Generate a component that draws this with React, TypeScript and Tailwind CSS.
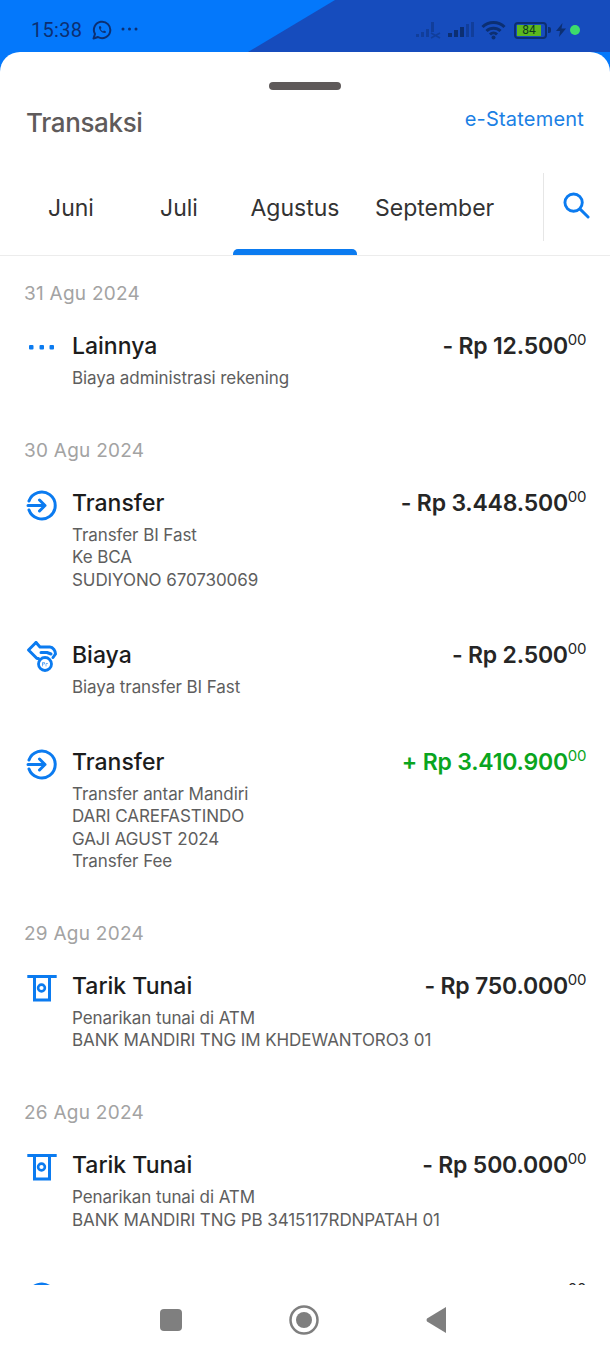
import React from "react";

const font = "font-['Inter','Noto_Sans',sans-serif]";

function TransferIcon() {
  return (
    <svg width="36" height="36" viewBox="0 0 36 36" fill="none" stroke="#0b7bf0" strokeWidth="3" strokeLinecap="round" strokeLinejoin="round">
      <path d="M5 16A13.5 13.5 0 1 1 5 25" />
      <path d="M4 20.5H21M15.5 15 21 20.5 15.5 26" />
    </svg>
  );
}

function FeeIcon() {
  return (
    <svg width="36" height="36" viewBox="0 0 36 36" fill="none" stroke="#0b7bf0" strokeWidth="3" strokeLinecap="round" strokeLinejoin="round">
      <path d="M12 5.5 4.5 13 13 21.5H14.5" />
      <path d="M12 5.5 16 10H26C29 10 31.5 14 31.5 17L29 20.5" />
      <path d="M17 15.5H23L27 17" />
      <circle cx="21" cy="27" r="6.5" strokeWidth="2.8" />
      <path d="M18.5 29V25.5H20.5V27H18.5M22 29V26.5H23.5" strokeWidth="0.8" opacity="0.7" />
    </svg>
  );
}

function AtmIcon() {
  return (
    <svg width="36" height="36" viewBox="0 0 36 36" fill="none" stroke="#0b7bf0" strokeLinejoin="miter">
      <path d="M3.3 8.5H32.7" strokeWidth="3" />
      <path d="M10.5 8.5V32H25.5V8.5" strokeWidth="3" />
      <circle cx="17.5" cy="20" r="3.4" strokeWidth="2.6" />
    </svg>
  );
}

function DotsIcon() {
  return (
    <svg width="36" height="36" viewBox="0 0 36 36" fill="#0b7bf0">
      <rect x="5" y="17" width="4.5" height="4.5" rx="1" />
      <rect x="15.5" y="17" width="4.5" height="4.5" rx="1" />
      <rect x="25.5" y="17" width="4.5" height="4.5" rx="1" />
    </svg>
  );
}

type Row = { icon: React.ReactNode; title: string; lines: string[]; amount: string; plus?: boolean };
type Group = { date: string; rows: Row[] };

const groups: Group[] = [
  {
    date: "31 Agu 2024",
    rows: [{ icon: <DotsIcon />, title: "Lainnya", lines: ["Biaya administrasi rekening"], amount: "- Rp 12.500" }],
  },
  {
    date: "30 Agu 2024",
    rows: [
      { icon: <TransferIcon />, title: "Transfer", lines: ["Transfer BI Fast", "Ke BCA", "SUDIYONO 670730069"], amount: "- Rp 3.448.500" },
      { icon: <FeeIcon />, title: "Biaya", lines: ["Biaya transfer BI Fast"], amount: "- Rp 2.500" },
      { icon: <TransferIcon />, title: "Transfer", lines: ["Transfer antar Mandiri", "DARI CAREFASTINDO", "GAJI AGUST 2024", "Transfer Fee"], amount: "+ Rp 3.410.900", plus: true },
    ],
  },
  {
    date: "29 Agu 2024",
    rows: [{ icon: <AtmIcon />, title: "Tarik Tunai", lines: ["Penarikan tunai di ATM", "BANK MANDIRI TNG IM KHDEWANTORO3 01"], amount: "- Rp 750.000" }],
  },
  {
    date: "26 Agu 2024",
    rows: [
      { icon: <AtmIcon />, title: "Tarik Tunai", lines: ["Penarikan tunai di ATM", "BANK MANDIRI TNG PB 3415117RDNPATAH 01"], amount: "- Rp 500.000" },
      { icon: <TransferIcon />, title: "Transfer", lines: [], amount: "- Rp 100.000" },
    ],
  },
];

function StatusBar() {
  return (
    <div className="relative h-[52px] bg-[#0478fb] overflow-hidden shrink-0">
      <svg className="absolute inset-0" width="610" height="52">
        <polygon points="335,0 610,0 610,52 248,52" fill="#164cbd" />
      </svg>
      <div className="relative flex items-center h-[60px] pl-[31px] pr-[30px] text-[#0c2f72]">
        <span className="font-['Roboto',sans-serif] text-[20px] font-normal leading-none w-[51px] tracking-[0.3px] whitespace-nowrap">15:38</span>
        <svg className="ml-[10px]" width="20" height="20" viewBox="0 0 20 20" fill="none" stroke="#0c2f72" strokeWidth="2">
          <path d="M1.5 18.5 3 14A8.2 8.2 0 1 1 6 17Z" strokeLinejoin="round" />
          <path d="M7 6.5C6.5 9.5 10 13.5 13.5 13L14 11.5 12 10.5 11 11.5C10 11 9 10 8.5 9L9.5 8 8.5 6Z" fill="#0c2f72" stroke="none" />
        </svg>
        <svg className="ml-[9px] mb-[2px]" width="17" height="4" viewBox="0 0 17 4" fill="#0c2f72">
          <circle cx="2" cy="2" r="1.5" />
          <circle cx="8.5" cy="2" r="1.5" />
          <circle cx="15" cy="2" r="1.5" />
        </svg>
        <div className="ml-auto flex items-center">
          <svg width="25" height="18" viewBox="0 0 25 18" fill="#0c2f72" opacity="0.45">
            <rect x="0" y="13" width="3" height="3" />
            <rect x="5" y="11" width="3" height="5" />
            <rect x="10" y="8" width="3" height="8" />
            <rect x="15" y="1" width="3" height="10" />
            <path d="M15 12 24 17M24 12 15 17" stroke="#0c2f72" strokeWidth="1.5" />
          </svg>
          <svg className="ml-[7px]" width="26" height="18" viewBox="0 0 26 18" fill="#0c2f72">
            <rect x="0" y="12" width="4" height="4" />
            <rect x="6" y="9" width="4" height="7" />
            <rect x="12" y="6" width="4" height="10" />
            <rect x="18" y="3" width="3" height="13" opacity="0.45" />
            <rect x="23" y="1" width="3" height="15" opacity="0.45" />
          </svg>
          <svg className="ml-[7px]" width="25" height="20" viewBox="0 0 25 20" fill="none" stroke="#0c2f72" strokeWidth="3">
            <path d="M1.5 7A15.5 15.5 0 0 1 23.5 7" />
            <path d="M5.5 11A10 10 0 0 1 19.5 11" />
            <path d="M9 14.5A5 5 0 0 1 16 14.5" />
            <circle cx="12.5" cy="17.5" r="2" fill="#0c2f72" stroke="none" />
          </svg>
          <div className="ml-[8px] w-[33px] h-[17px] border-2 border-[#0c2f72] rounded-[4px] p-[1px] flex">
            <div className="w-[24px] bg-[#5cb81f] flex items-center justify-center text-[12px] leading-none text-[#0c3a20] font-['Roboto',sans-serif]">84</div>
          </div>
          <div className="w-[3px] h-[6px] bg-[#0c2f72] ml-[1px] rounded-r-[2px]" />
          <svg className="ml-[5px]" width="10" height="14" viewBox="0 0 10 14" fill="#0c2f72">
            <path d="M6.5 0 0 8H4L3 14 10 5.5H5.5Z" />
          </svg>
          <div className="ml-[4px] w-[10px] h-[10px] rounded-full bg-[#3ddc6b]" />
        </div>
      </div>
    </div>
  );
}

function Header() {
  return (
    <div className="shrink-0">
      <div className="pt-[30px] flex justify-center">
        <div className="w-[72px] h-[8px] rounded-full bg-[#5f5a5a]" />
      </div>
      <div className="mt-[13px] pl-[26px] pr-[26px] flex justify-between items-start">
        <span className="text-[26px] leading-[40px] font-medium text-[#5f5b5b] tracking-[-0.35px]">Transaksi</span>
        <span className="text-[20px] leading-[32px] text-[#1b80e4] tracking-[0.2px]">e-Statement</span>
      </div>
      <div className="mt-[30px] h-[83px] flex border-b border-[#ececec]">
        <div className="w-[543px] flex items-start pt-[20px] text-[23px] leading-[30px] text-[#333333]">
          <div className="w-[125px] text-center pl-[17px]">Juni</div>
          <div className="w-[108px] text-center">Juli</div>
          <div className="relative w-[124px] h-[62px] text-center">
            Agustus
            <div className="absolute left-0 right-0 top-[56px] h-[6px] rounded-t-[5px] bg-[#0b7bf0]" />
          </div>
          <div className="ml-[18px] whitespace-nowrap">September</div>
        </div>
        <div className="h-[68px] border-l border-[#e6e6e6] pl-[19px] pt-[19px]">
          <svg width="27" height="27" viewBox="0 0 28 28" fill="none" stroke="#0b7bf0" strokeWidth="3" strokeLinecap="round">
            <circle cx="11" cy="11" r="9" />
            <path d="M17.5 17.5 26 26" />
          </svg>
        </div>
      </div>
    </div>
  );
}

function TxRow({ row }: { row: Row }) {
  return (
    <div className="flex mb-[47.6px]">
      <div className="w-[36px] h-[32px] shrink-0 flex items-center justify-center">{row.icon}</div>
      <div className="ml-[12px] flex-1 min-w-0">
        <div className="flex justify-between items-start">
          <span className="text-[23px] leading-[32px] font-medium text-[#1c1c1c] tracking-[0px]">{row.title}</span>
          <span className={`text-[23px] leading-[32px] font-semibold tracking-[-0.2px] whitespace-nowrap ${row.plus ? "text-[#0aa51e]" : "text-[#262626]"}`}>
            {row.amount}
            <sup className="text-[15px] font-normal top-[-9px] tracking-[-0.4px]">00</sup>
          </span>
        </div>
        <div className="mt-[5px] text-[17px] leading-[22.4px] text-[#5e5e5e] tracking-[-0.08px]">
          {row.lines.map((l) => (
            <div key={l} className="whitespace-nowrap">{l}</div>
          ))}
        </div>
      </div>
    </div>
  );
}

function List() {
  return (
    <div className="flex-1 min-h-0 overflow-hidden px-[24px] pt-[24px]">
      {groups.map((g, i) => (
        <div key={i}>
          <div className="text-[19px] leading-[28px] text-[#a3a3a3] mb-[22px] tracking-[0.25px]">{g.date}</div>
          {g.rows.map((r, j) => (
            <TxRow key={j} row={r} />
          ))}
        </div>
      ))}
    </div>
  );
}

function NavBar() {
  return (
    <div className="shrink-0 h-[71px] flex items-center pb-[1px] bg-white">
      <div className="ml-[160px] w-[22px] h-[22px] rounded-[4px] bg-[#7f7f7f]" />
      <svg className="ml-[107px]" width="30" height="30" viewBox="0 0 30 30">
        <circle cx="15" cy="15" r="13.5" fill="none" stroke="#7f7f7f" strokeWidth="2.5" />
        <circle cx="15" cy="15" r="8" fill="#7f7f7f" />
      </svg>
      <svg className="ml-[107px]" width="20" height="26" viewBox="0 0 20 26" fill="#7f7f7f">
        <path d="M20 0V26L1 14.5Q0 13 1 11.5Z" />
      </svg>
    </div>
  );
}

export default function App() {
  return (
    <div className={`w-[610px] h-[1356px] flex flex-col bg-[#0478fb] overflow-hidden ${font}`}>
      <StatusBar />
      <div className="flex-1 min-h-0 flex flex-col bg-white rounded-t-[20px]">
        <Header />
        <List />
        <NavBar />
      </div>
    </div>
  );
}
